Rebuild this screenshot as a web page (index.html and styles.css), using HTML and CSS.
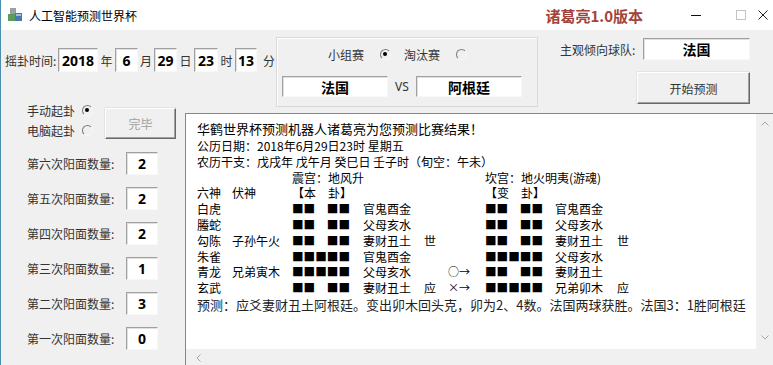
FILE: index.html
```html
<!DOCTYPE html>
<html lang="zh-CN">
  <head>
    <meta charset="UTF-8" />
    <title>人工智能预测世界杯</title>
    <link rel="stylesheet" href="styles.css">
  </head>
  <body>
    <div class="window">
      <div class="titlebar">
        <svg class="app-icon" width="15" height="14" viewBox="0 0 15 14">
          <rect x="2" y="0" width="6" height="6" fill="#9aa0a6" />
          <rect x="0" y="6" width="7" height="7" fill="#5c9c5a" />
          <rect x="7" y="5" width="7" height="8" fill="#4a78b0" />
          <rect x="8" y="6" width="5" height="2" fill="#9cc0e4" />
        </svg>
        <span class="app-title">人工智能预测世界杯</span>
        <span class="brand">诸葛亮1.0版本</span>
        <div class="controls">
          <svg class="ctl-min" width="10" height="10"><line x1="0" y1="5.5" x2="10" y2="5.5" stroke="#111" /></svg>
          <svg class="ctl-max" width="10" height="10"><rect x="0.5" y="0.5" width="9" height="9" fill="none" stroke="#c4c4c4" /></svg>
          <svg class="ctl-close" width="10" height="10"><path d="M0.5 0.5L9.5 9.5M9.5 0.5L0.5 9.5" stroke="#222" /></svg>
        </div>
      </div>

      <div class="top">
        <div class="datetime">
          <span class="dt-label">摇卦时间:</span>
          <span class="box num w40">2018</span><span class="unit">年</span>
          <span class="box num w23">6</span><span class="unit w16">月</span>
          <span class="box num w23">29</span><span class="unit">日</span>
          <span class="box num w24">23</span><span class="unit">时</span>
          <span class="box num w22">13</span><span class="unit last">分</span>
        </div>

        <div class="group">
          <div class="match-type">
            <span>小组赛</span><span class="radio checked"></span>
            <span class="second">淘汰赛</span><span class="radio"></span>
          </div>
          <div class="teams">
            <span class="box team">法国</span>
            <span class="vs">VS</span>
            <span class="box team">阿根廷</span>
          </div>
        </div>

        <div class="right">
          <div class="favor">
            <span class="favor-label">主观倾向球队:</span>
            <span class="box team favor-box">法国</span>
          </div>
          <button class="btn start">开始预测</button>
        </div>
      </div>

      <div class="main">
        <div class="left">
          <div class="mode">
            <div class="radios">
              <div class="radio-row"><span>手动起卦</span><span class="radio checked"></span></div>
              <div class="radio-row"><span>电脑起卦</span><span class="radio"></span></div>
            </div>
            <button class="btn finish" disabled>完毕</button>
          </div>
          <div class="count-row"><span class="count-label">第六次阳面数量:</span><span class="box num count-box">2</span></div>
          <div class="count-row"><span class="count-label">第五次阳面数量:</span><span class="box num count-box">2</span></div>
          <div class="count-row"><span class="count-label">第四次阳面数量:</span><span class="box num count-box">2</span></div>
          <div class="count-row"><span class="count-label">第三次阳面数量:</span><span class="box num count-box">1</span></div>
          <div class="count-row"><span class="count-label">第二次阳面数量:</span><span class="box num count-box">3</span></div>
          <div class="count-row"><span class="count-label">第一次阳面数量:</span><span class="box num count-box">0</span></div>
        </div>

        <div class="output">
          <div class="output-body">
            <div class="text">
              <p class="headline">华鹤世界杯预测机器人诸葛亮为您预测比赛结果！</p>
              <p>公历日期：2018年6月29日23时 星期五</p>
              <p>农历干支：戊戌年 戊午月 癸巳日 壬子时（旬空：午未）</p>
              <div class="gua">
                <span class="palace-a">震宫：地风升</span>
                <span class="palace-b">坎宫：地火明夷(游魂)</span>

                <span>六神</span><span>伏神</span><span>【本　卦】</span><span></span><span></span><span></span><span>【变　卦】</span><span></span><span></span>

                <span>白虎</span><span></span><span class="yao">■■　■■</span><span>官鬼酉金</span><span></span><span></span><span class="yao">■■　■■</span><span>官鬼酉金</span><span></span>
                <span>螣蛇</span><span></span><span class="yao">■■　■■</span><span>父母亥水</span><span></span><span></span><span class="yao">■■　■■</span><span>父母亥水</span><span></span>
                <span>勾陈</span><span>子孙午火</span><span class="yao">■■　■■</span><span>妻财丑土</span><span>世</span><span></span><span class="yao">■■　■■</span><span>妻财丑土</span><span>世</span>
                <span>朱雀</span><span></span><span class="yao">■■■■■</span><span>官鬼酉金</span><span></span><span></span><span class="yao">■■■■■</span><span>父母亥水</span><span></span>
                <span>青龙</span><span>兄弟寅木</span><span class="yao">■■■■■</span><span>父母亥水</span><span></span><span class="move">○→</span><span class="yao">■■　■■</span><span>妻财丑土</span><span></span>
                <span>玄武</span><span></span><span class="yao">■■　■■</span><span>妻财丑土</span><span>应</span><span class="move">×→</span><span class="yao">■■■■■</span><span>兄弟卯木</span><span>应</span>
              </div>
              <p class="verdict">预测：应爻妻财丑土阿根廷。变出卯木回头克，卯为2、4数。法国两球获胜。法国3：1胜阿根廷</p>
            </div>
            <div class="vscroll">
              <svg width="8" height="5"><polyline points="0.5,4.5 4,1 7.5,4.5" fill="none" stroke="#a6a6a6" /></svg>
              <svg width="8" height="5"><polyline points="0.5,0.5 4,4 7.5,0.5" fill="none" stroke="#a6a6a6" /></svg>
            </div>
          </div>
          <div class="hscroll">
            <svg width="5" height="8"><polyline points="4.5,0.5 1,4 4.5,7.5" fill="none" stroke="#a6a6a6" /></svg>
          </div>
        </div>
      </div>
    </div>
  </body>
</html>
```

FILE: styles.css
```css
body {
  margin: 0;
  background: #f0f0f0;
  font-family: "Noto Sans CJK SC", sans-serif;
}
.window {
  width: 773px;
  height: 365px;
  overflow: hidden;
  box-sizing: border-box;
  border-left: 1px solid #4b8eb0;
  background: #f0f0f0;
  color: #333;
  font-size: 12px;
}

/* title bar */
.titlebar {
  height: 30px;
  background: #fff;
  display: flex;
  align-items: center;
}
.app-icon {
  margin-left: 7px;
}
.app-title {
  margin-left: 6px;
  color: #000;
  font-size: 12px;
}
.brand {
  margin-left: auto;
  color: #a3443c;
  font-size: 15px;
  font-weight: bold;
}
.controls {
  width: 130px;
  display: flex;
  align-items: center;
}
.ctl-min {
  margin-left: 48px;
}
.ctl-max {
  margin-left: 35px;
}
.ctl-close {
  margin-left: 12px;
}

/* text boxes */
.box {
  display: inline-flex;
  align-items: center;
  justify-content: center;
  box-sizing: border-box;
  background: #fff;
  border: 1px solid;
  border-color: #a0a0a0 #f8f8f8 #f8f8f8 #a0a0a0;
  box-shadow: inset 1px 1px 0 #e0e0e0;
  color: #000;
  font-weight: bold;
}
.num {
  font-family: "Noto Sans", sans-serif;
  font-size: 14px;
  height: 24px;
}
.team {
  font-size: 14px;
  width: 106px;
  height: 21px;
}
.w40 { width: 40px; }
.w24 { width: 24px; }
.w23 { width: 23px; }
.w22 { width: 22px; }

/* top area */
.top {
  display: flex;
  align-items: flex-start;
  height: 72px;
}
.datetime {
  display: flex;
  align-items: center;
  width: 271px;
  margin-left: 4px;
  margin-top: 18px;
}
.dt-label {
  width: 53px;
}
.unit {
  width: 17px;
  text-align: center;
}
.unit.w16 {
  width: 16px;
}
.unit.last {
  width: auto;
  margin-left: 6px;
}
.group {
  margin-top: 7px;
  width: 262px;
  height: 70px;
  box-sizing: border-box;
  border: 1px solid #d9d9d9;
  box-shadow: inset 1px 1px 0 #fff;
}
.match-type {
  display: flex;
  align-items: center;
  height: 16px;
  margin-top: 8px;
  padding-left: 51px;
}
.match-type .radio {
  margin-left: 16px;
}
.match-type .second {
  margin-left: 13px;
}
.teams {
  display: flex;
  align-items: center;
  margin-top: 14px;
  padding-left: 5px;
}
.vs {
  font-family: "Noto Sans", sans-serif;
  width: 28px;
  text-align: center;
}
.right {
  margin-left: 22px;
  margin-top: 8px;
}
.favor {
  display: flex;
  align-items: center;
}
.favor-label {
  width: 83px;
}
.favor-box {
  width: 107px;
  height: 22px;
}

/* buttons */
.btn {
  display: block;
  box-sizing: border-box;
  background: #f0f0f0;
  border: 1px solid;
  border-color: #fff #696969 #696969 #fff;
  box-shadow: inset -1px -1px 0 #a0a0a0, 0 -1px 0 #e3e3e3, -1px 0 0 #e3e3e3;
  font-family: "Noto Sans CJK SC", sans-serif;
  font-size: 12px;
  color: #333;
  padding: 0;
}
.start {
  margin-left: 77px;
  margin-top: 12px;
  width: 113px;
  height: 32px;
}
.finish {
  margin-top: 6px;
  width: 71px;
  height: 31px;
  color: #a0a0a0;
}

/* radios */
.radio {
  display: inline-block;
  position: relative;
  width: 11px;
  height: 11px;
  box-sizing: border-box;
  border-radius: 50%;
  border: 1.5px solid;
  border-color: #7a7a7a #f7f7f7 #f7f7f7 #7a7a7a;
}
.radio.checked::after {
  content: "";
  position: absolute;
  left: 2px;
  top: 2px;
  width: 4px;
  height: 4px;
  border-radius: 50%;
  background: #000;
}

/* left column */
.main {
  display: flex;
}
.left {
  width: 184px;
}
.mode {
  display: flex;
  height: 44px;
  padding-left: 26px;
}
.radios {
  width: 78px;
  display: flex;
  flex-direction: column;
  gap: 4px;
}
.radio-row {
  display: flex;
  align-items: center;
  gap: 7px;
  height: 16px;
}
.count-row {
  display: flex;
  align-items: center;
  height: 35px;
  padding-left: 26px;
}
.count-label {
  width: 99px;
}
.count-box {
  width: 32px;
  height: 23px;
}

/* output box */
.output {
  flex: 1;
  margin-top: 11px;
  height: 254px;
  border-top: 1px solid #828790;
  border-left: 1px solid #828790;
  background: #fff;
  display: flex;
  flex-direction: column;
}
.output-body {
  display: flex;
  height: 235px;
}
.text {
  flex: 1;
  padding: 5px 0 0 11px;
  font-size: 12px;
  line-height: 15.8px;
  color: #000;
  white-space: nowrap;
  overflow: hidden;
}
.text p {
  margin: 0;
}
.headline {
  font-size: 13px;
  line-height: 19px;
}
.verdict {
  font-size: 13px;
  line-height: 17px;
  color: #222;
}
.gua {
  display: grid;
  grid-template-columns: 35px 60px 71px 61px 24px 37px 70px 62px 40px;
}
.palace-a {
  grid-column: 3 / span 4;
}
.palace-b {
  grid-column: 7 / span 3;
}
.yao {
  font-size: 11.6px;
}
.move {
  font-size: 11px;
}
.vscroll {
  width: 17px;
  background: #f0f0f0;
  display: flex;
  flex-direction: column;
  align-items: center;
  justify-content: space-between;
  padding: 7px 0 9px;
  box-sizing: border-box;
}
.hscroll {
  height: 17px;
  background: #f0f0f0;
  display: flex;
  align-items: center;
  padding-left: 10px;
}
```
